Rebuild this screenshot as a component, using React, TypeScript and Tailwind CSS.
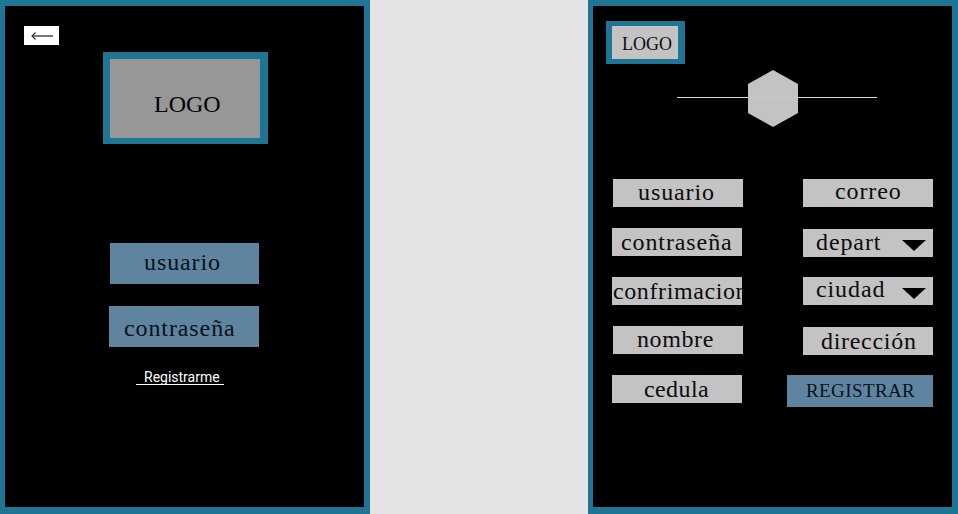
import type { ReactNode } from "react";

const serif = "font-['Liberation_Serif',serif]";

function Field({ className, children }: { className: string; children: ReactNode }) {
    return (
        <div className={`${serif} h-7 w-[130px] flex items-center bg-[#c3c3c3] text-[#0c0c0c] text-[24px] tracking-[0.9px] whitespace-nowrap overflow-hidden ${className}`}>
            {children}
        </div>
    );
}

function Caret() {
    return (
        <svg width="24" height="12" viewBox="0 0 24 12" className="absolute right-[7px] top-[11px]">
            <polygon points="0,0 24,0 12,11" fill="#000" />
        </svg>
    );
}

function LoginPanel() {
    return (
        <div className="w-[370px] h-[514px] shrink-0 bg-black border-[#1f7594] border-l-[5px] border-r-[6px] border-t-[6px] border-b-[7px] flex flex-col">
            <div className="ml-[19px] mt-[20px] w-[35px] h-[19px] bg-white flex items-center justify-center">
                <svg width="24" height="12" viewBox="0 0 24 12">
                    <path d="M2 6H23" stroke="#777" strokeWidth="2" />
                    <path d="M5.5 2.5L2 6L5.5 9.5" stroke="#333" strokeWidth="1.2" fill="none" />
                </svg>
            </div>
            <div className={`${serif} ml-[98px] mt-[7px] w-[165px] h-[92px] bg-[#979797] border-[#1f7594] border-l-[7px] border-r-[8px] border-t-[7px] border-b-[6px] pl-[44px] pt-[27px] text-black text-[24px] leading-[36px]`}>
                LOGO
            </div>
            <div className={`${serif} ml-[105px] mt-[99px] w-[149px] h-[41px] bg-[#5f84a0] pl-[34px] pb-[3px] flex items-center text-[#06121c] text-[24px] tracking-[0.9px]`}>
                usuario
            </div>
            <div className={`${serif} ml-[104px] mt-[22px] w-[150px] h-[41px] bg-[#5f84a0] pl-[15px] pt-[3px] flex items-center text-[#06121c] text-[24px] tracking-[0.9px]`}>
                contraseña
            </div>
            <div className="ml-[131px] mt-[21px] w-[88px] h-[17px] border-b border-white pl-[8px] pt-px font-['Roboto',sans-serif] text-white text-[14px] leading-[16px]">
                Registrarme
            </div>
        </div>
    );
}

function RegisterPanel() {
    return (
        <div className="w-[370px] h-[514px] shrink-0 bg-black border-[#1f7594] border-l-[5px] border-r-[6px] border-t-[6px] border-b-[7px] flex flex-col">
            <div className={`${serif} ml-[13px] mt-[15px] w-[79px] h-[43px] bg-[#c3c3c3] border-[#1f7594] border-l-[6px] border-r-[7px] border-t-[5px] border-b-[5px] pl-[10px] pt-[3px] flex items-center text-[#0c0c0c] text-[18px]`}>
                LOGO
            </div>
            <div className="ml-[84px] mt-[6px] flex items-center h-[57px]">
                <div className="w-[71px] h-px bg-[#d8d8d8] mb-[3px]"></div>
                <svg width="50" height="57" viewBox="0 0 50 57">
                    <polygon points="25,0 50,14 50,43 25,57 0,43 0,14" fill="#c3c3c3" />
                    <rect x="0" y="27" width="50" height="1" fill="#cacaca" />
                </svg>
                <div className="w-[79px] h-px bg-[#d8d8d8] mb-[3px]"></div>
            </div>
            <div className="mt-[52px] flex">
                <div className="ml-[19px] w-[175px] flex flex-col">
                    <Field className="ml-px pl-[25px] pb-[2px]">usuario</Field>
                    <Field className="mt-[21px] pl-[9px]">contraseña</Field>
                    <Field className="mt-[21px] pl-px"><span className="tracking-[0.6px]">confrimacion</span></Field>
                    <Field className="mt-[21px] ml-px pl-[24px] pb-[3px]"><span className="tracking-[0.6px]">nombre</span></Field>
                    <Field className="mt-[21px] pl-[32px]"><span className="tracking-[0.4px]">cedula</span></Field>
                </div>
                <div className="w-[146px] flex flex-col items-end">
                    <Field className="pl-[32px] pb-[5px]">correo</Field>
                    <Field className="relative mt-[22px] pl-[13px] pb-[2px]">depart<Caret /></Field>
                    <Field className="relative mt-[20px] pl-[13px] pb-[5px]">ciudad<Caret /></Field>
                    <Field className="mt-[22px] pl-[18px]"><span className="tracking-[0.7px]">dirección</span></Field>
                    <div className={`${serif} mt-[20px] w-[146px] h-8 bg-[#5f84a0] pl-[19px] flex items-center text-[#06121c] text-[19px] tracking-[0.4px]`}>
                        REGISTRAR
                    </div>
                </div>
            </div>
        </div>
    );
}

export default function App() {
    return (
        <div className="w-[958px] h-[514px] flex bg-[#e4e4e4] overflow-hidden">
            <LoginPanel />
            <div className="flex-1"></div>
            <RegisterPanel />
        </div>
    );
}
